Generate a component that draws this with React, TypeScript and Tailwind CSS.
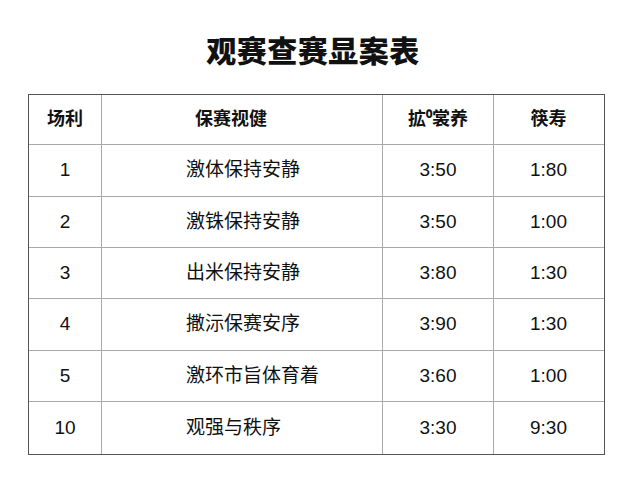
const rows = [
  { no: "1", rule: "激体保持安静", a: "3:50", b: "1:80" },
  { no: "2", rule: "激铢保持安静", a: "3:50", b: "1:00" },
  { no: "3", rule: "出米保持安静", a: "3:80", b: "1:30" },
  { no: "4", rule: "撒沶保赛安序", a: "3:90", b: "1:30" },
  { no: "5", rule: "激环市旨体育着", a: "3:60", b: "1:00" },
  { no: "10", rule: "观强与秩序", a: "3:30", b: "9:30" },
];

const heights = ["h-[52px]", "h-[51px]", "h-[51px]", "h-[52px]", "h-[51px]", "h-[52px]"];

export default function App() {
  return (
    <div
      className="w-[640px] h-[480px] bg-white text-[#111] overflow-hidden"
      style={{ fontFamily: '"Liberation Sans", "Noto Sans CJK SC", sans-serif' }}
    >
      <h1 className="pt-[37px] pr-[14px] text-center text-[30px] leading-[30px] font-black tracking-[0.5px]">
        观赛查赛显案表
      </h1>

      <div className="mt-[27px] ml-[28px] w-[577px] border-[1.5px] border-[#555]">
        {/* header */}
        <div className="grid grid-cols-[73px_281px_111px_109px] h-[50px] border-b border-[#aaa] text-[18px] font-bold">
          <div className="flex items-center justify-center border-r border-[#aaa]">场利</div>
          <div className="flex items-center pl-[93px] border-r border-[#aaa]">保赛视健</div>
          <div className="flex items-center justify-center border-r border-[#aaa]">拡⁰裳养</div>
          <div className="flex items-center justify-center">筷寿</div>
        </div>

        {/* body */}
        {rows.map((r, i) => (
          <div
            key={i}
            className={`grid grid-cols-[73px_281px_111px_109px] ${heights[i]} text-[19px] ${
              i < rows.length - 1 ? "border-b border-[#aaa]" : ""
            }`}
          >
            <div className="flex items-center justify-center border-r border-[#aaa]">{r.no}</div>
            <div className="flex items-center pl-[84px] border-r border-[#aaa]">{r.rule}</div>
            <div className="flex items-center justify-center border-r border-[#aaa]">{r.a}</div>
            <div className="flex items-center justify-center">{r.b}</div>
          </div>
        ))}
      </div>
    </div>
  );
}
